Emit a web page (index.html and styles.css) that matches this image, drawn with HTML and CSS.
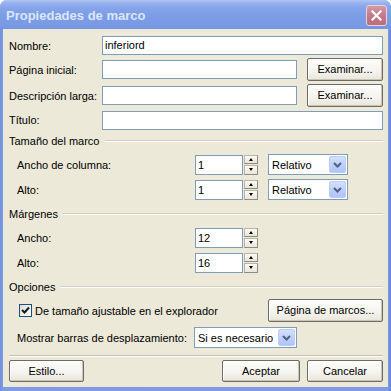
FILE: index.html
```html
<!DOCTYPE html>
<html lang="es">
<head>
<meta charset="utf-8">
<title>Propiedades de marco</title>
<link rel="stylesheet" href="styles.css">
</head>
<body>
<div class="window">
  <div class="titlebar">
    <span class="title">Propiedades de marco</span>
    <span class="close">
      <svg width="11" height="11" viewBox="0 0 11 11"><path d="M1.5 1.5 L9.5 9.5 M9.5 1.5 L1.5 9.5" stroke="#fff" stroke-width="2.2" stroke-linecap="square"/></svg>
    </span>
  </div>
  <div class="client">
    <div class="top-grid">
      <span class="lbl">Nombre:</span>
      <div class="input span2">inferiord</div>
      <span class="lbl">Página inicial:</span>
      <div class="input"></div>
      <div class="btn gbtn">Examinar...</div>
      <span class="lbl">Descripción larga:</span>
      <div class="input"></div>
      <div class="btn gbtn">Examinar...</div>
      <span class="lbl">Título:</span>
      <div class="input span2"></div>
    </div>

    <div class="ghead"><span>Tamaño del marco</span><i class="rule"></i></div>
    <div class="srow">
      <span class="slbl">Ancho de columna:</span>
      <div class="spin"><div class="val">1</div><div class="arrows"><span><i class="up"></i></span><span><i class="down"></i></span></div></div>
      <div class="select"><span class="txt">Relativo</span><span class="arr"><svg width="9" height="6" viewBox="0 0 9 6"><path d="M1 1 L4.5 4.5 L8 1" fill="none" stroke="#4d6185" stroke-width="2"/></svg></span></div>
    </div>
    <div class="srow">
      <span class="slbl">Alto:</span>
      <div class="spin"><div class="val">1</div><div class="arrows"><span><i class="up"></i></span><span><i class="down"></i></span></div></div>
      <div class="select"><span class="txt">Relativo</span><span class="arr"><svg width="9" height="6" viewBox="0 0 9 6"><path d="M1 1 L4.5 4.5 L8 1" fill="none" stroke="#4d6185" stroke-width="2"/></svg></span></div>
    </div>

    <div class="ghead gap"><span>Márgenes</span><i class="rule"></i></div>
    <div class="srow">
      <span class="slbl">Ancho:</span>
      <div class="spin"><div class="val">12</div><div class="arrows"><span><i class="up"></i></span><span><i class="down"></i></span></div></div>
    </div>
    <div class="srow">
      <span class="slbl">Alto:</span>
      <div class="spin"><div class="val">16</div><div class="arrows"><span><i class="up"></i></span><span><i class="down"></i></span></div></div>
    </div>

    <div class="ghead gap"><span>Opciones</span><i class="rule"></i></div>
    <div class="crow">
      <span class="check"><svg width="9" height="9" viewBox="0 0 9 9"><path d="M1 4 L3.5 6.5 L8 1.5" fill="none" stroke="#1a1a1a" stroke-width="2"/></svg></span>
      <span class="ctext">De tamaño ajustable en el explorador</span>
      <div class="btn wide">Página de marcos...</div>
    </div>
    <div class="mrow">
      <span class="mlbl">Mostrar barras de desplazamiento:</span>
      <div class="select big"><span class="txt">Si es necesario</span><span class="arr"><svg width="9" height="6" viewBox="0 0 9 6"><path d="M1 1 L4.5 4.5 L8 1" fill="none" stroke="#4d6185" stroke-width="2"/></svg></span></div>
    </div>

    <div class="sep"></div>
    <div class="brow">
      <div class="btn b-estilo">Estilo...</div>
      <div class="btn b-ok">Aceptar</div>
      <div class="btn b-cancel">Cancelar</div>
    </div>
  </div>
</div>
</body>
</html>
```

FILE: styles.css
```css
* { box-sizing: border-box; }
html, body { margin: 0; padding: 0; }
body {
  width: 391px;
  height: 391px;
  overflow: hidden;
  background: #fff;
  font-family: "Liberation Sans", Arial, sans-serif;
  font-size: 11px;
  color: #000;
}
.window {
  width: 391px;
  height: 391px;
  display: flex;
  flex-direction: column;
  background: linear-gradient(to right, #6f8fdf 0px, #7d9ce6 3px, #7b9be5 388px, #6585d8 391px);
  border-radius: 7px 7px 0 0;
}
.titlebar {
  height: 29px;
  flex: none;
  display: flex;
  align-items: center;
  padding: 0 4px 0 6px;
  border-radius: 7px 7px 0 0;
  background: linear-gradient(to bottom, #b1c7f3 0%, #98b3ee 10%, #86a5ea 25%, #7d9de7 50%, #7a9ae6 85%, #7394e2 100%);
}
.title {
  flex: 1;
  color: #dce6f8;
  font-weight: bold;
  font-size: 13px;
  margin-top: 1px;
}
.close {
  width: 21px;
  height: 21px;
  border: 1px solid #e6d3dc;
  border-radius: 3px;
  background: linear-gradient(to bottom, #d59aa5, #c47a88 50%, #bb6e7d);
  display: flex;
  align-items: center;
  justify-content: center;
  margin-top: 2px;
}
.client {
  flex: 1;
  margin: 0 3px 4px 3px;
  background: #ece9d8;
  padding: 7px 5px 0 6px;
  display: flex;
  flex-direction: column;
}
.top-grid {
  display: grid;
  grid-template-columns: 93px 1fr 86px;
  grid-template-rows: 19px 23px 23px 20px;
  column-gap: 0;
  row-gap: 3px;
  align-items: center;
}
.lbl { white-space: nowrap; }
.input {
  height: 19px;
  border: 1px solid #7f9db9;
  background: #fff;
  padding: 0 2px;
  line-height: 17px;
}
.span2 { grid-column: 2 / 4; }
.top-grid .span2:last-child { align-self: end; }
.gbtn { width: 76px; justify-self: end; }
.btn {
  height: 23px;
  border: 1px solid #6c6b65;
  border-radius: 2px;
  background: linear-gradient(to bottom, #fdfdfb 0%, #f4f3ee 60%, #e8e5da 100%);
  box-shadow: inset -1px -1px 0 #c9c6b8, inset 1px 1px 0 #ffffff;
  display: flex;
  align-items: center;
  justify-content: center;
  line-height: 1;
}
.ghead {
  display: flex;
  align-items: center;
  gap: 5px;
  height: 14px;
  margin-top: 4px;
}
.ghead.gap { margin-top: 7px; }
.ghead .rule {
  flex: 1;
  height: 2px;
  border-top: 1px solid #d0cfc0;
  border-bottom: 1px solid #fbfbf8;
}
.srow {
  display: flex;
  align-items: center;
  height: 21px;
  padding-left: 8px;
  margin-top: 6px;
}
.srow + .srow { margin-top: 4px; }
.slbl { width: 178px; flex: none; }
.spin {
  display: flex;
  height: 20px;
  width: 63px;
  flex: none;
}
.spin .val {
  width: 48px;
  border: 1px solid #7f9db9;
  background: #fff;
  padding-left: 2px;
  line-height: 18px;
}
.spin .arrows {
  width: 15px;
  display: flex;
  flex-direction: column;
  gap: 1px;
  padding: 0 0 0 1px;
}
.spin .arrows span {
  flex: 1;
  border: 1px solid #b8b5a6;
  border-right-color: #8e8c80;
  border-bottom-color: #8e8c80;
  background: linear-gradient(to bottom, #fbfaf6, #e9e6da);
  display: flex;
  align-items: center;
  justify-content: center;
}
.up {
  width: 0; height: 0;
  border-left: 2.5px solid transparent;
  border-right: 2.5px solid transparent;
  border-bottom: 3px solid #000;
}
.down {
  width: 0; height: 0;
  border-left: 2.5px solid transparent;
  border-right: 2.5px solid transparent;
  border-top: 3px solid #000;
}
.select {
  width: 80px;
  height: 21px;
  margin-left: 10px;
  border: 1px solid #7f9db9;
  background: #fff;
  display: flex;
  align-items: center;
  padding: 1px;
  flex: none;
}
.select.big { width: 103px; margin-left: 0; }
.select .txt { flex: 1; padding-left: 2px; }
.select .arr {
  width: 17px;
  height: 17px;
  border: 1px solid #bccdf8;
  border-radius: 2px;
  background: linear-gradient(to bottom, #d3dffd, #bccdf9 60%, #b0c4f7);
  display: flex;
  align-items: center;
  justify-content: center;
}
.crow {
  display: flex;
  align-items: center;
  height: 23px;
  margin-top: 5px;
  padding-left: 10px;
}
.check {
  width: 13px;
  height: 13px;
  border: 1px solid #1c5180;
  background: linear-gradient(135deg, #dcdcd6, #ffffff);
  display: flex;
  align-items: center;
  justify-content: center;
  flex: none;
}
.ctext { margin-left: 3px; }
.btn.wide { width: 115px; margin-left: auto; }
.mrow {
  display: flex;
  align-items: center;
  height: 21px;
  margin-top: 5px;
  padding-left: 8px;
}
.mlbl { width: 177px; flex: none; }
.sep {
  height: 2px;
  margin-top: 7px;
  border-top: 1px solid #c5c2b2;
  border-bottom: 1px solid #fbfbf8;
}
.brow {
  display: flex;
  height: 22px;
  margin-top: 3px;
}
.brow .btn { height: 22px; }
.b-estilo { width: 75px; }
.b-ok { width: 78px; margin-left: auto; }
.b-cancel { width: 76px; margin-left: 7px; }
```
